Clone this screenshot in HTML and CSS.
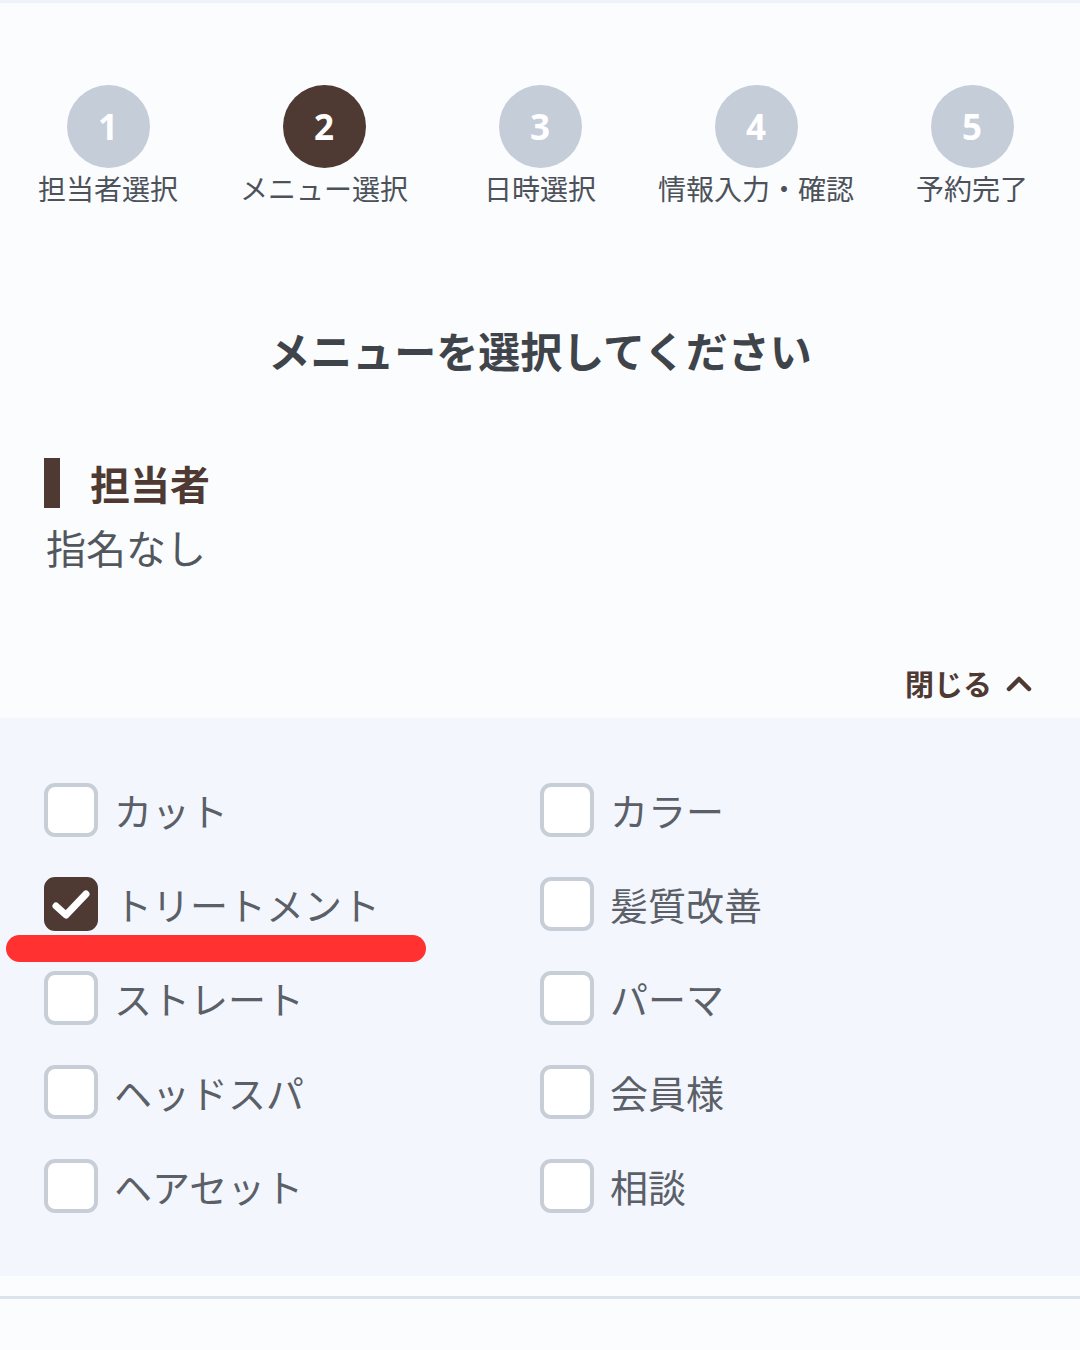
FILE: index.html
```html
<!DOCTYPE html>
<html lang="ja">
  <head>
    <meta charset="UTF-8">
    <title>メニュー選択</title>
    <link rel="stylesheet" href="styles.css">
  </head>
  <body>
    <div class="topline"></div>

    <ol class="steps">
      <li class="step"><span class="step-num">1</span><span class="step-label">担当者選択</span></li>
      <li class="step active"><span class="step-num">2</span><span class="step-label">メニュー選択</span></li>
      <li class="step"><span class="step-num">3</span><span class="step-label">日時選択</span></li>
      <li class="step"><span class="step-num">4</span><span class="step-label">情報入力・確認</span></li>
      <li class="step"><span class="step-num">5</span><span class="step-label">予約完了</span></li>
    </ol>

    <h1 class="page-title">メニューを選択してください</h1>

    <section class="staff">
      <h2 class="section-title">担当者</h2>
      <p class="staff-name">指名なし</p>
    </section>

    <div class="toggle-row">
      <button class="toggle">閉じる
        <svg width="26" height="18" viewBox="0 0 26 18"><path d="M3 15 L13 5 L23 15" fill="none" stroke="#4e3a33" stroke-width="4.5" stroke-linecap="round" stroke-linejoin="round"/></svg>
      </button>
    </div>

    <div class="menu-panel">
      <div class="menu-grid">
        <label class="menu-item"><span class="box"></span>カット</label>
        <label class="menu-item"><span class="box"></span>カラー</label>
        <label class="menu-item checked"><span class="box">
          <svg width="44" height="44" viewBox="0 0 44 44"><path d="M7 24 L17 33 L37 12" fill="none" stroke="#fff" stroke-width="7" stroke-linecap="round" stroke-linejoin="round"/></svg>
        </span>トリートメント<span class="marker"></span></label>
        <label class="menu-item"><span class="box"></span>髪質改善</label>
        <label class="menu-item"><span class="box"></span>ストレート</label>
        <label class="menu-item"><span class="box"></span>パーマ</label>
        <label class="menu-item"><span class="box"></span>ヘッドスパ</label>
        <label class="menu-item"><span class="box"></span>会員様</label>
        <label class="menu-item"><span class="box"></span>ヘアセット</label>
        <label class="menu-item"><span class="box"></span>相談</label>
      </div>
    </div>

    <div class="bottom-gap"></div>
    <div class="bottom-line"></div>
  </body>
</html>
```

FILE: styles.css
```css
body {
  margin: 0;
  background: #fbfcfe;
  font-family: "Noto Sans CJK JP", "Noto Sans", sans-serif;
  color: #4a4f57;
}

.topline {
  height: 3px;
  background: #eef3fa;
}

/* step indicator */
.steps {
  list-style: none;
  margin: 0;
  padding: 82px 0 0;
  display: flex;
}

.step {
  flex: 1;
  display: flex;
  flex-direction: column;
  align-items: center;
}

.step-num {
  width: 83px;
  height: 83px;
  border-radius: 50%;
  background: #c5cdd9;
  color: #fff;
  font-family: "Noto Sans", sans-serif;
  font-weight: 700;
  font-size: 35px;
  display: flex;
  align-items: center;
  justify-content: center;
}

.step.active .step-num {
  background: #4e3a33;
}

.step-label {
  font-size: 28px;
  line-height: 40px;
  color: #4d525a;
}

.page-title {
  margin: 114px 0 0;
  text-align: center;
  font-size: 42px;
  line-height: 56px;
  font-weight: 700;
  color: #3f444a;
}

/* staff */
.staff {
  padding: 0 44px;
  margin-top: 80px;
}

.section-title {
  margin: 0;
  font-size: 40px;
  line-height: 50px;
  font-weight: 700;
  color: #4e3a33;
  border-left: 16px solid #4e3a33;
  padding-left: 30px;
}

.staff-name {
  margin: 11px 0 0 2px;
  font-size: 40px;
  line-height: 56px;
  color: #52575e;
}

.toggle-row {
  display: flex;
  justify-content: flex-end;
  padding: 0 48px 0 0;
  margin-top: 88px;
}

.toggle {
  border: none;
  background: none;
  padding: 0;
  font-family: inherit;
  font-size: 29px;
  font-weight: 700;
  color: #4e3a33;
  display: flex;
  align-items: center;
  gap: 14px;
  line-height: 40px;
}

/* menu */
.menu-panel {
  margin-top: 15px;
  background: #f3f7fd;
  padding: 65px 44px 63px;
}

.menu-grid {
  display: grid;
  grid-template-columns: 496px 1fr;
  row-gap: 40px;
}

.menu-item {
  position: relative;
  display: flex;
  align-items: center;
  gap: 16px;
  font-size: 38px;
  line-height: 54px;
  color: #5b6068;
}

.box {
  width: 54px;
  height: 54px;
  box-sizing: border-box;
  border: 4px solid #c7ced8;
  border-radius: 11px;
  background: #fff;
  display: flex;
  align-items: center;
  justify-content: center;
  flex-shrink: 0;
}

.checked .box {
  background: #4e3a33;
  border-color: #4e3a33;
}

/* red annotation under the chosen item */
.marker {
  position: absolute;
  left: -38px;
  top: 58px;
  width: 420px;
  height: 27px;
  border-radius: 14px;
  background: #ff3131;
}

.bottom-gap {
  height: 20px;
}

.bottom-line {
  height: 3px;
  background: #dde3ec;
}
```
